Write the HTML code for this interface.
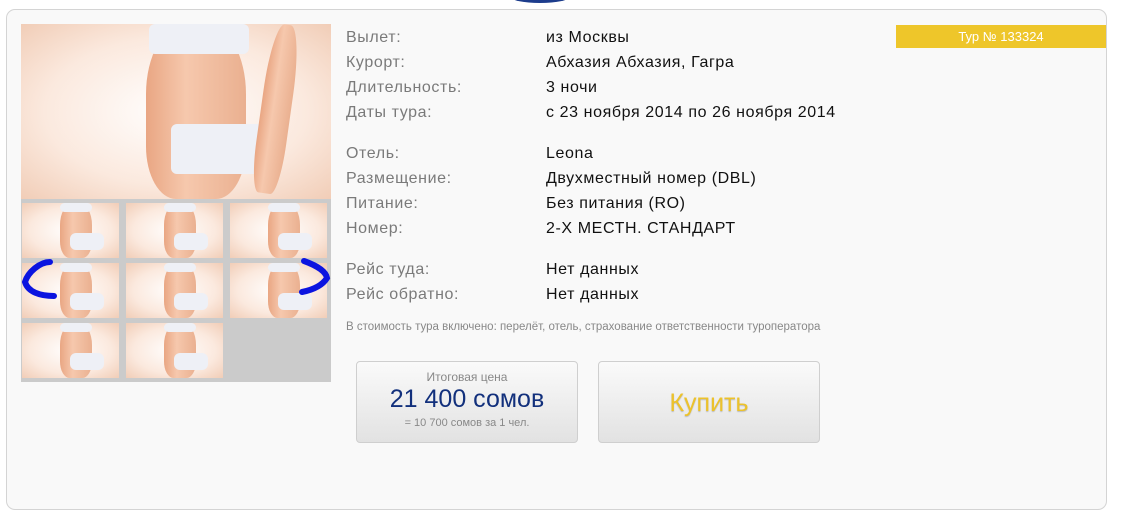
<!DOCTYPE html>
<html><head><meta charset="utf-8"><style>
*{margin:0;padding:0;box-sizing:border-box}
body{width:1127px;height:525px;background:#fff;font-family:"Liberation Sans",sans-serif;position:relative;overflow:hidden}
.arc{position:absolute;left:510px;top:-10px;width:60px;height:13px;border-radius:50%;background:#1c3c8c}
.box{position:absolute;left:6px;top:9px;width:1101px;height:501px;border:1px solid #d4d4d4;border-radius:9px;background:#f9f9f9}
.gal{position:absolute;left:21px;top:24px;width:310px;height:358px;background:#cbcbcb}
.ph{position:absolute;overflow:hidden;background:radial-gradient(ellipse at 50% 50%,#fff 0%,#fbe9de 60%,#f1cdb7 100%)}
.ph .b{position:absolute;background:linear-gradient(90deg,#e9a683,#f6c8ad 40%,#eab090);border-radius:40% 40% 30% 30%}
.ph .t{position:absolute;background:#eef0f6;border-radius:6px}
.lbl,.val{position:absolute;font-size:16px;letter-spacing:0.6px}
.lbl{left:346px;color:#7a7a7a}
.val{left:546px;color:#111}
.badge{position:absolute;left:896px;top:25px;width:210px;height:23px;background:#eec62a;color:#fff;font-size:13px;text-align:center;line-height:23px}
.note{position:absolute;left:346px;top:321px;font-size:11.5px;color:#888}
.btn{position:absolute;top:361px;width:222px;height:82px;border:1px solid #cfcfcf;border-radius:4px;background:linear-gradient(#fafafa,#e2e2e2);text-align:center}
</style></head><body>
<div class="arc"></div>
<div class="box"></div>
<div class="gal">
 <div class="ph" style="left:0;top:0;width:310px;height:175px">
  <div class="b" style="left:125px;top:0;width:100px;height:175px"></div>
  <div class="t" style="left:128px;top:0;width:100px;height:30px"></div>
  <div class="t" style="left:150px;top:100px;width:105px;height:50px"></div>
  <div class="b" style="left:240px;top:0;width:30px;height:170px;transform:rotate(8deg)"></div>
 </div>
</div>
<div id="thumbs"></div>
<script>
var xs=[22,126,230],ys=[203,263,323],h='';
for(var r=0;r<3;r++)for(var c=0;c<3;c++){if(r==2&&c==2)continue;
h+='<div class="ph" style="left:'+xs[c]+'px;top:'+ys[r]+'px;width:97px;height:55px"><div class="b" style="left:38px;top:0;width:32px;height:55px"></div><div class="t" style="left:38px;top:0;width:32px;height:9px"></div><div class="t" style="left:48px;top:30px;width:34px;height:17px"></div></div>';}
document.getElementById('thumbs').innerHTML=h;
</script>
<svg style="position:absolute;left:0;top:0" width="340" height="300"><path d="M50 262 C40 262 28 272 25 282 C28 292 40 296 54 296" stroke="#0b14e0" stroke-width="6" fill="none" stroke-linecap="round"/><path d="M304 261 C318 266 326 272 327 278 C322 286 312 290 302 292" stroke="#0b14e0" stroke-width="6" fill="none" stroke-linecap="round"/></svg>
<div class="lbl" style="top:29px">Вылет:</div><div class="val" style="top:29px">из Москвы</div>
<div class="lbl" style="top:54px">Курорт:</div><div class="val" style="top:54px">Абхазия Абхазия, Гагра</div>
<div class="lbl" style="top:79px">Длительность:</div><div class="val" style="top:79px">3 ночи</div>
<div class="lbl" style="top:104px">Даты тура:</div><div class="val" style="top:104px">с 23 ноября 2014 по 26 ноября 2014</div>
<div class="lbl" style="top:145px">Отель:</div><div class="val" style="top:145px">Leona</div>
<div class="lbl" style="top:170px">Размещение:</div><div class="val" style="top:170px">Двухместный номер (DBL)</div>
<div class="lbl" style="top:195px">Питание:</div><div class="val" style="top:195px">Без питания (RO)</div>
<div class="lbl" style="top:220px">Номер:</div><div class="val" style="top:220px">2-Х МЕСТН. СТАНДАРТ</div>
<div class="lbl" style="top:261px">Рейс туда:</div><div class="val" style="top:261px">Нет данных</div>
<div class="lbl" style="top:286px">Рейс обратно:</div><div class="val" style="top:286px">Нет данных</div>
<div class="badge">Тур № 133324</div>
<div class="note">В стоимость тура включено: перелёт, отель, страхование ответственности туроператора</div>
<div class="btn" style="left:356px"><div style="font-size:12px;color:#888;margin-top:8px">Итоговая цена</div><div style="font-size:25px;color:#12307c;margin-top:1px">21 400 сомов</div><div style="font-size:11px;color:#888;margin-top:3px">= 10 700 сомов за 1 чел.</div></div>
<div class="btn" style="left:598px"><div style="font-size:25px;color:#ecc22b;margin-top:27px;text-shadow:0 1px 1px #bbb">Купить</div></div>
</body></html>
